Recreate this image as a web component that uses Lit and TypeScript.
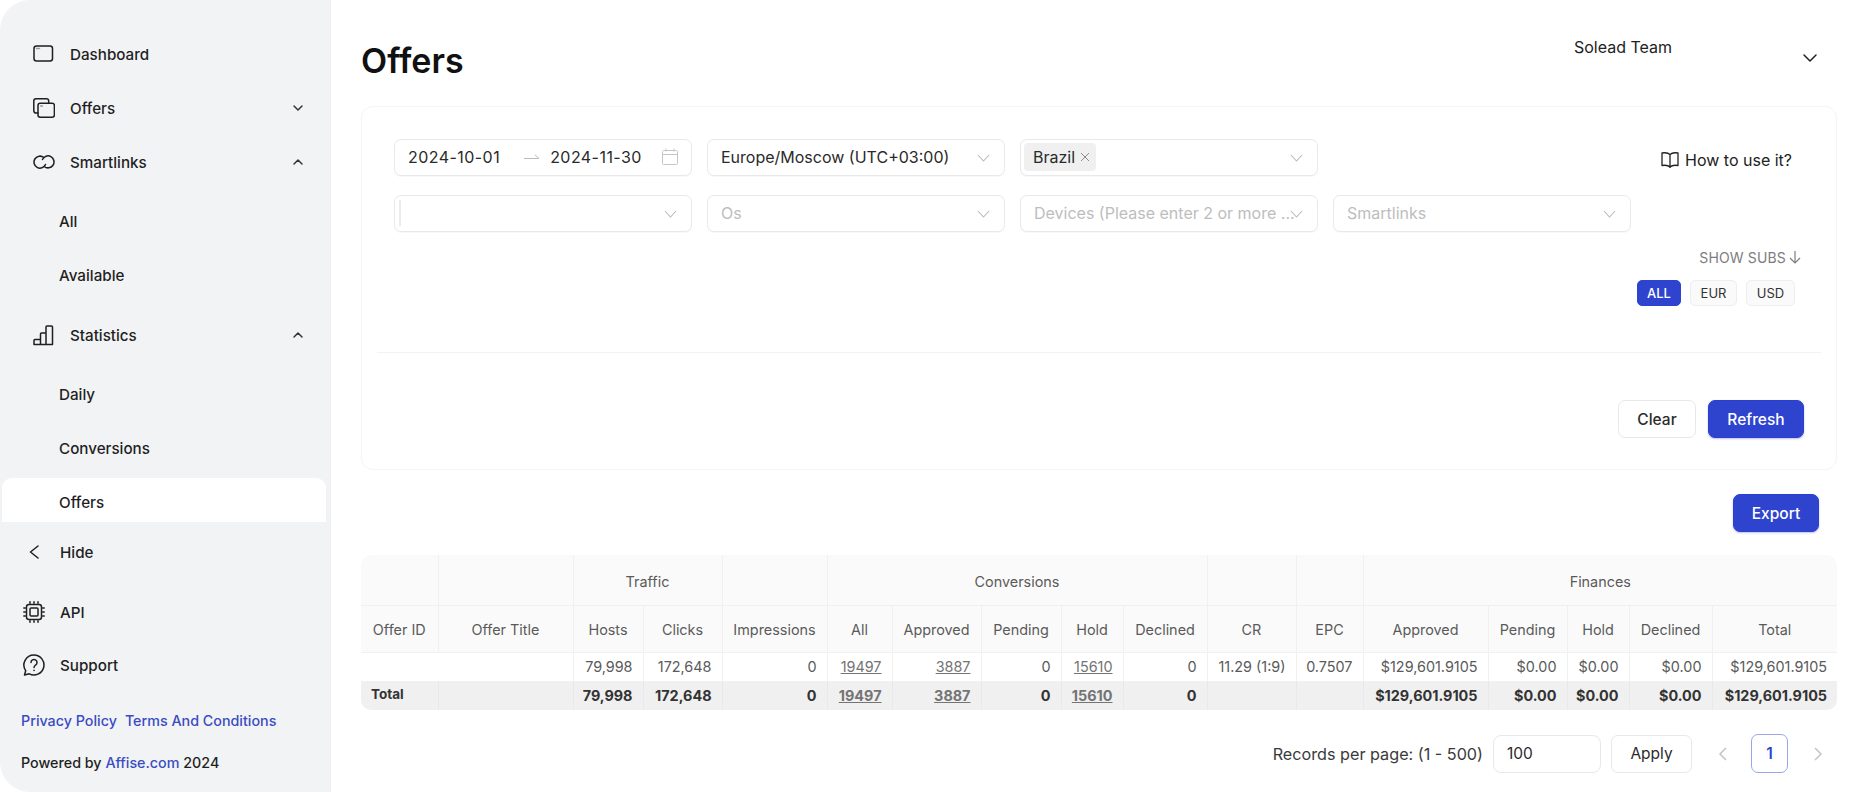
import { LitElement, html, css, svg, nothing } from "lit";
import { customElement } from "lit/decorators.js";

const chevron = (dir: "up" | "down") => html`<svg class="nav-chev" width="12" height="8" viewBox="0 0 12 8" fill="none" stroke="currentColor" stroke-width="1.5" stroke-linecap="round" stroke-linejoin="round">
  <path d=${dir === "down" ? "M2 2l4 4 4-4" : "M2 6l4-4 4 4"}></path>
</svg>`;

const selectArrow = html`<svg class="arrow" width="13" height="8" viewBox="0 0 13 8" fill="none" stroke="currentColor" stroke-width="1.1"><path d="M1 1l5.500 6L12 1"></path></svg>`;

const icons: Record<string, unknown> = {
  dashboard: svg`<rect x="1" y="1" width="18.500" height="15" rx="2.500"/><path d="M3.500 3.600h3" stroke="#9a9a9a"/>`,
  offers: svg`<path d="M5 15H3a2.200 2.200 0 0 1-2.200-2.200V3A2.200 2.200 0 0 1 3 .8h10.500A2.200 2.200 0 0 1 15.700 3v2"/><rect x="5" y="5.200" width="16.400" height="14" rx="2.200"/><path d="M7.500 8h2" stroke="#9a9a9a"/>`,
  links: svg`<path d="M10.800 2.500A6 6 0 1 0 12.500 9.500"/><path d="M11.200 11.500A6 6 0 1 0 9.500 4.500"/>`,
  stats: svg`<path d="M1 19.500v-4a1 1 0 0 1 1-1h5.500V19.500zM7.500 19.500V9a1 1 0 0 1 1-1h4.500M13 19.500V2a1 1 0 0 1 1-1h4.500a1 1 0 0 1 1 1v17.500H1"/>`,
  hide: svg`<path d="M9 1L1.500 7 9 13"/>`,
  api: svg`<rect x="3.500" y="3.500" width="15" height="15" rx="2.500"/><rect x="7" y="7" width="8" height="8" rx="1"/><path d="M7 .8v1.500M11 .8v1.500M15 .8v1.500M7 19.700v1.500M11 19.700v1.500M15 19.700v1.500M.8 7h1.500M.8 11h1.500M.8 15h1.500M19.700 7h1.500M19.700 11h1.500M19.700 15h1.500"/>`,
  help: svg`<path d="M11 1a10 10 0 1 1-4.800 18.800L1.500 21l1.200-4.300A10 10 0 0 1 11 1z"/><path d="M8 8.500a3 3 0 1 1 4.600 2.500c-1 .7-1.600 1.200-1.600 2.500"/><path d="M11 16.200v.3"/>`,
};

const navIcon = (name: string, w: number, h: number) => html`<svg class="nav-icon" width=${w} height=${h} viewBox="0 0 ${w} ${h}" fill="none" stroke="currentColor" stroke-width="1.5" stroke-linecap="round" stroke-linejoin="round">${icons[name]}</svg>`;

// column widths measured off the table, px
const colWidths = [77, 135, 70, 79, 105, 65, 89, 80, 62, 84, 89, 67, 125, 79, 62, 83, 125];

const groupRow = [
  { label: "", span: 1 },
  { label: "", span: 1 },
  { label: "Traffic", span: 2 },
  { label: "", span: 1 },
  { label: "Conversions", span: 5 },
  { label: "", span: 1 },
  { label: "", span: 1 },
  { label: "Finances", span: 5 },
];

const headRow = ["Offer ID", "Offer Title", "Hosts", "Clicks", "Impressions", "All", "Approved", "Pending", "Hold", "Declined", "CR", "EPC", "Approved", "Pending", "Hold", "Declined", "Total"];

const linked = new Set([5, 6, 8]);
const values = ["79,998", "172,648", "0", "19497", "3887", "0", "15610", "0", "11.29 (1:9)", "0.7507", "$129,601.9105", "$0.00", "$0.00", "$0.00", "$129,601.9105"];
const totals = ["79,998", "172,648", "0", "19497", "3887", "0", "15610", "0", "", "", "$129,601.9105", "$0.00", "$0.00", "$0.00", "$129,601.9105"];

@customElement("app-root")
export class AppRoot extends LitElement {
  static styles = css`
    * {
      box-sizing: border-box;
    }

    :host {
      display: block;
      width: 1864px;
      height: 792px;
      overflow: hidden;
      background: #fff;
      color: #1f1f1f;
      font-family: Inter, "Liberation Sans", sans-serif;
    }

    .page {
      display: flex;
      height: 792px;
    }

    /* sidebar */
    .side {
      flex: 0 0 331px;
      display: flex;
      flex-direction: column;
      padding-top: 32px;
      background: #f2f3f5;
      border-radius: 30px 0 0 30px;
      border-right: 1px solid #f0f0f2;
      font-size: 15.2px;
      font-weight: 500;
    }

    .item {
      display: flex;
      align-items: center;
      height: 44px;
      margin-bottom: 10px;
      padding: 0 26px 0 33px;
    }

    .item .label {
      margin-left: 15px;
    }

    .slot {
      flex: 0 0 22px;
      display: flex;
      justify-content: flex-start;
    }

    .slot.inset {
      padding-left: 6px;
    }

    .item .nav-chev {
      margin-left: auto;
      color: #333;
    }

    .subs {
      display: flex;
      flex-direction: column;
      padding-top: 5px;
      padding-bottom: 6px;
    }

    .sub {
      display: flex;
      align-items: center;
      height: 44px;
      margin: 0 4px 10px 2px;
      padding-left: 57px;
    }

    .subs.last {
      padding-bottom: 0;
    }

    .sub.active {
      margin-top: -2px;
      margin-bottom: 10px;
      padding-top: 4px;
      background: #fff;
      border-radius: 10px 10px 0 0;
    }

    .tool {
      display: flex;
      align-items: center;
      height: 44px;
      margin-bottom: 9px;
      padding-left: 23px;
    }

    .tool .label {
      margin-left: 15px;
    }

    .tool.hide {
      height: 40px;
      margin-bottom: 18px;
    }

    .legal {
      display: flex;
      gap: 8px;
      margin-top: 16px;
      padding-left: 21px;
      font-size: 14.3px;
      color: #3a4cc2;
    }

    .powered {
      margin-top: 25px;
      padding-left: 21px;
      font-size: 14.3px;
    }

    .powered span {
      color: #3a4cc2;
    }

    /* main column */
    .main {
      flex: 1;
      min-width: 0;
      padding: 0 27px 0 30px;
    }

    .top {
      display: flex;
      justify-content: space-between;
      height: 106px;
    }

    h1 {
      margin: 41px 0 0;
      font-size: 34px;
      line-height: 40px;
      font-weight: 600;
      color: #111;
    }

    .team {
      display: flex;
      justify-content: space-between;
      width: 244px;
      margin: 37px 19px 0 0;
      font-size: 16px;
      line-height: 20px;
      color: #222;
    }

    .team svg {
      margin-top: 16px;
      color: #222;
    }

    .card {
      height: 364px;
      padding: 32px 15px 0;
      background: #fff;
      border: 1px solid #f4f4f4;
      border-radius: 12px;
    }

    .filters {
      display: flex;
      justify-content: space-between;
      padding: 0 0 0 17px;
    }

    .grid {
      display: grid;
      grid-template-columns: repeat(4, 298px);
      gap: 19px 15px;
    }

    .field {
      position: relative;
      display: flex;
      align-items: center;
      height: 37px;
      padding: 0 13px 2px;
      background: #fff;
      border: 1px solid #e9e9e9;
      border-radius: 7px;
      font-size: 16px;
      color: #2a2a2a;
      white-space: nowrap;
      box-shadow: 0 1px 1px rgba(0, 0, 0, 0.03);
    }

    .field .arrow {
      position: absolute;
      top: 14px;
      right: 14px;
      color: #b9b9b9;
    }

    .field.empty {
      color: #bdbdbd;
    }

    .date {
      letter-spacing: 0.45px;
    }

    .range {
      display: flex;
      margin: 0 10px 0 24px;
      color: #bbb;
    }

    .date-icon {
      margin-left: auto;
      color: #c6c6c6;
      display: flex;
    }

    .tag {
      display: flex;
      align-items: center;
      gap: 5px;
      height: 28px;
      margin-left: -10px;
      padding: 0 6px 0 9px;
      background: #f0f0f0;
      border-radius: 4px;
    }

    .tag svg {
      color: #8c8c8c;
    }

    .caret {
      width: 2px;
      height: 26px;
      margin-left: -9px;
      background: #ececec;
    }

    .help {
      display: flex;
      align-items: center;
      gap: 6px;
      height: 18px;
      margin: 12px 29px 0 0;
      font-size: 16px;
      color: #222;
    }

    .subs-toggle {
      display: flex;
      justify-content: flex-end;
      align-items: center;
      gap: 2px;
      height: 18px;
      margin-top: 16px;
      padding-right: 19px;
      font-size: 14px;
      letter-spacing: 0.15px;
      color: #7d7d7d;
    }

    .currencies {
      display: flex;
      justify-content: flex-end;
      gap: 9px;
      margin-top: 14px;
      padding-right: 26px;
    }

    .chip {
      display: flex;
      align-items: center;
      justify-content: center;
      width: 47px;
      height: 26px;
      background: #fafafa;
      border: 1px solid #eee;
      border-radius: 5px;
      font-size: 13px;
      color: #333;
    }

    .chip.on {
      width: 44px;
      background: #2e44cf;
      border-color: #2e44cf;
      color: #fff;
      font-weight: 500;
    }

    .chip.usd {
      width: 49px;
    }

    hr {
      height: 1px;
      margin: 46px 0 0;
      border: 0;
      background: #f3f3f3;
    }

    .actions {
      display: flex;
      justify-content: flex-end;
      gap: 12px;
      margin-top: 47px;
      padding-right: 17px;
    }

    .btn {
      display: flex;
      align-items: center;
      justify-content: center;
      height: 38px;
      background: #fff;
      border: 1px solid #e8e8e8;
      border-radius: 7px;
      font-size: 15.5px;
      font-weight: 500;
      color: #2b2b2b;
    }

    .btn.clear {
      width: 78px;
    }

    .btn.refresh {
      width: 96px;
    }

    .btn.export {
      width: 86px;
    }

    .btn.primary {
      background: #2e44cf;
      border-color: #2b40cc;
      color: #fff;
      box-shadow: 0 1px 2px rgba(30, 50, 200, 0.3);
    }

    .export-row {
      display: flex;
      justify-content: flex-end;
      margin-top: 24px;
      padding-right: 18px;
    }

    /* report table */
    .table-wrap {
      margin-top: 23px;
      border-radius: 10px;
      overflow: hidden;
    }

    table {
      width: 1476px;
      table-layout: fixed;
      border-collapse: collapse;
      font-size: 14.4px;
      color: #5a5a5a;
    }

    th {
      padding: 0;
      background: #fafafa;
      font-weight: 400;
      text-align: center;
      border-left: 1px solid #f0f0f0;
      border-bottom: 1px solid #f0f0f0;
    }

    th:first-child {
      border-left: 0;
    }

    .groups th {
      height: 50px;
      padding-top: 3px;
    }

    .heads th {
      height: 47px;
      padding-top: 2px;
    }

    td {
      height: 29px;
      padding: 0 10px 0 0;
      text-align: right;
      background: #fff;
      border-left: 1px solid #f0f0f0;
    }

    td:first-child {
      border-left: 0;
    }

    td a {
      color: #747474;
      text-decoration: underline;
    }

    .total td {
      background: #f0f0f0;
      border-left-color: #e9e9e9;
      font-weight: 700;
      color: #333;
    }

    .total td a {
      color: #747474;
    }

    .total td.name {
      padding: 0 0 3px 10px;
      font-size: 13.5px;
      text-align: left;
    }

    /* pagination */
    .pager {
      display: flex;
      align-items: center;
      margin-top: 24px;
      font-size: 15.5px;
      color: #3a3a3a;
    }

    .pager .records {
      margin-left: auto;
      font-size: 16.2px;
    }

    .pager .input {
      display: flex;
      align-items: center;
      width: 108px;
      height: 38px;
      margin-left: 10px;
      padding-left: 13px;
      border: 1px solid #e8e8e8;
      border-radius: 8px;
      color: #2b2b2b;
    }

    .pager .btn {
      width: 81px;
      margin-left: 10px;
      font-weight: 400;
    }

    .pager .prev {
      display: flex;
      margin-left: 26px;
      color: #c4c4c4;
    }

    .pager .current {
      display: flex;
      align-items: center;
      justify-content: center;
      width: 37px;
      height: 39px;
      margin-left: 23px;
      border: 1px solid #9aa6ea;
      border-radius: 7px;
      font-weight: 600;
      color: #2e44cf;
    }

    .pager .next {
      display: flex;
      margin: 0 14px 0 25px;
      color: #c4c4c4;
    }
  `;

  private navItem(label: string, icon: string, w: number, h: number, open?: boolean) {
    return html`<div class="item">
      <span class="slot">${navIcon(icon, w, h)}</span>
      <span class="label">${label}</span>
      ${open === undefined ? nothing : chevron(open ? "up" : "down")}
    </div>`;
  }

  private renderSide() {
    return html`<aside class="side">
      ${this.navItem("Dashboard", "dashboard", 22, 18)}
      ${this.navItem("Offers", "offers", 22, 20, false)}
      ${this.navItem("Smartlinks", "links", 22, 14, true)}
      <div class="subs">
        <div class="sub">All</div>
        <div class="sub">Available</div>
      </div>
      ${this.navItem("Statistics", "stats", 21, 21, true)}
      <div class="subs last">
        <div class="sub">Daily</div>
        <div class="sub">Conversions</div>
        <div class="sub active">Offers</div>
      </div>
      <div class="tool hide">
        <span class="slot inset">${navIcon("hide", 10, 14)}</span>
        <span class="label">Hide</span>
      </div>
      <div class="tool"><span class="slot">${navIcon("api", 22, 22)}</span><span class="label">API</span></div>
      <div class="tool"><span class="slot">${navIcon("help", 22, 22)}</span><span class="label">Support</span></div>
      <div class="legal"><span>Privacy Policy</span><span>Terms And Conditions</span></div>
      <div class="powered">Powered by <span>Affise.com</span> 2024</div>
    </aside>`;
  }

  private renderFilters() {
    return html`<div class="filters">
      <div class="grid">
        <div class="field">
          <span class="date">2024-10-01</span>
          <span class="range"><svg width="16" height="8" viewBox="0 0 16 8" fill="none" stroke="currentColor"><path d="M0 5.500h15L11 2"></path></svg></span>
          <span class="date">2024-11-30</span>
          <span class="date-icon"><svg width="16" height="17" viewBox="0 0 16 17" fill="none" stroke="currentColor"><rect x=".5" y="2.500" width="15" height="14" rx="1"></rect><path d="M.5 6.500h15M4 .5v3M12 .5v3"></path></svg></span>
        </div>
        <div class="field"><span>Europe/Moscow (UTC+03:00)</span>${selectArrow}</div>
        <div class="field">
          <span class="tag">Brazil<svg width="10" height="10" viewBox="0 0 10 10" fill="none" stroke="currentColor"><path d="M1 1l8 8M9 1l-8 8"></path></svg></span>
          ${selectArrow}
        </div>
        <div></div>
        <div class="field"><span class="caret"></span>${selectArrow}</div>
        <div class="field empty"><span>Os</span>${selectArrow}</div>
        <div class="field empty"><span>Devices (Please enter 2 or more ...</span>${selectArrow}</div>
        <div class="field empty"><span>Smartlinks</span>${selectArrow}</div>
      </div>
      <div class="help">
        <svg width="18" height="18" viewBox="0 0 18 18" fill="none" stroke="currentColor" stroke-width="1.300" stroke-linejoin="round"><path d="M9 3.500C7.500 2 4 1.500 1 2v12.500c3-.5 6.500 0 8 1.500 1.500-1.500 5-2 8-1.500V2c-3-.5-6.500 0-8 1.500zM9 3.500V17"></path></svg>
        <span>How to use it?</span>
      </div>
    </div>
    <div class="subs-toggle">
      <span>SHOW SUBS</span>
      <svg width="14" height="14" viewBox="0 0 14 14" fill="none" stroke="currentColor" stroke-width="1.200"><path d="M7 1v12M2 8l5 5 5-5"></path></svg>
    </div>
    <div class="currencies">
      <span class="chip on">ALL</span>
      <span class="chip">EUR</span>
      <span class="chip usd">USD</span>
    </div>
    <hr />
    <div class="actions">
      <div class="btn clear">Clear</div>
      <div class="btn primary refresh">Refresh</div>
    </div>`;
  }

  private renderTable() {
    return html`<div class="table-wrap">
      <table>
        <colgroup>${colWidths.map((w) => html`<col style="width:${w}px" />`)}</colgroup>
        <thead>
          <tr class="groups">${groupRow.map((g) => html`<th colspan=${g.span}>${g.label}</th>`)}</tr>
          <tr class="heads">${headRow.map((h) => html`<th>${h}</th>`)}</tr>
        </thead>
        <tbody>
          <tr>
            <td colspan="2"></td>
            ${values.map((v, i) => html`<td>${linked.has(i + 2) ? html`<a>${v}</a>` : v}</td>`)}
          </tr>
          <tr class="total">
            <td class="name">Total</td>
            <td></td>
            ${totals.map((v, i) => html`<td>${linked.has(i + 2) ? html`<a>${v}</a>` : v}</td>`)}
          </tr>
        </tbody>
      </table>
    </div>`;
  }

  render() {
    return html`<div class="page">
      ${this.renderSide()}
      <main class="main">
        <header class="top">
          <h1>Offers</h1>
          <div class="team">
            <span>Solead Team</span>
            <svg width="16" height="10" viewBox="0 0 16 10" fill="none" stroke="currentColor" stroke-width="1.500" stroke-linecap="round" stroke-linejoin="round"><path d="M2 2l6 6 6-6"></path></svg>
          </div>
        </header>
        <section class="card">${this.renderFilters()}</section>
        <div class="export-row"><div class="btn primary export">Export</div></div>
        ${this.renderTable()}
        <div class="pager">
          <span class="records">Records per page: (1 - 500)</span>
          <span class="input">100</span>
          <div class="btn">Apply</div>
          <span class="prev"><svg width="10" height="16" viewBox="0 0 10 16" fill="none" stroke="currentColor" stroke-width="1.500"><path d="M8 2L2 8l6 6"></path></svg></span>
          <span class="current">1</span>
          <span class="next"><svg width="10" height="16" viewBox="0 0 10 16" fill="none" stroke="currentColor" stroke-width="1.500"><path d="M2 2l6 6-6 6"></path></svg></span>
        </div>
      </main>
    </div>`;
  }
}
